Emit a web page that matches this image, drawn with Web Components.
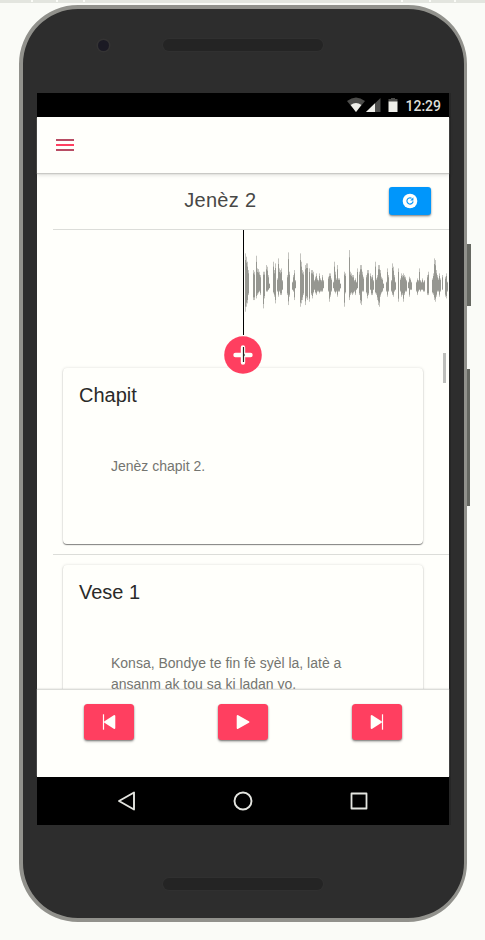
<!DOCTYPE html>
<html lang="ht"><head><meta charset="utf-8"><title>Jenèz 2</title>
<style>html,body{margin:0;height:940px;overflow:hidden;background:#fafbf7;font-family:"Liberation Sans",Arial,sans-serif}</style></head>
<body>
<phone-frame>
  <status-bar></status-bar>
  <app-toolbar></app-toolbar>
  <chapter-heading>Jenèz 2</chapter-heading>
  <scroll-pane>
    <wave-form></wave-form>
    <verse-card heading="Chapit">Jenèz chapit 2.</verse-card>
    <verse-card heading="Vese 1">Konsa, Bondye te fin fè syèl la, latè a ansanm ak tou sa ki ladan yo.</verse-card>
  </scroll-pane>
  <player-bar></player-bar>
  <nav-bar></nav-bar>
</phone-frame>
<script>
function define(name, html, init) {
  const t = document.createElement('template');
  t.innerHTML = html;
  customElements.define(name, class extends HTMLElement {
    constructor() {
      super();
      this.attachShadow({mode: 'open'}).append(t.content.cloneNode(true));
    }
    connectedCallback() { if (init) init(this, this.shadowRoot); }
  });
}

define('phone-frame', `<style>
:host{display:block;position:relative;box-sizing:border-box;height:940px;padding:5px 0 0 19px}
.strip{position:absolute;top:0;left:0;right:0;height:3px;background:#e3e5df}
.strip i{position:absolute;top:0;width:2px;height:2px;background:#fafbf7}
.side{position:absolute;left:467px;width:4px;background:#666862}
.body{box-sizing:border-box;width:448.4px;height:917.4px;border:4px solid #91918c;border-right-width:3.4px;border-radius:59px;background:#2d2d2d;padding:84px 0 0 14px;position:relative}
.screen{width:412px;height:732px;background:#fffffb;display:flex;flex-direction:column;box-shadow:2px 0 #262626;overflow:visible}
.slot{position:absolute;left:140px;width:160px;height:12px;border-radius:6px;background:#242424;box-shadow:0 0 0 1px #303030}
.cam{position:absolute;left:75px;top:31px;width:11px;height:11px;border-radius:50%;background:#1b1a24;box-shadow:0 0 0 1.5px #343333}
</style>
<div class="strip"><i style="left:31px"></i><i style="left:56px"></i><i style="left:83px"></i><i style="left:401px"></i><i style="left:429px"></i><i style="left:454px"></i></div>
<div class="side" style="top:244px;height:62px"></div><div class="side" style="top:369px;height:137px;width:3px"></div>
<div class="body"><div class="cam"></div><div class="slot" style="top:30px"></div><div class="screen"><slot></slot></div><div class="slot" style="top:869px"></div></div>`);

define('status-bar', `<style>
:host{display:flex;height:24px;background:#000;align-items:center;justify-content:flex-end;box-sizing:border-box;padding-right:8px;color:#deded9;font:500 14px/24px Roboto,sans-serif}
svg{display:block;flex:none;margin-right:6px}span{padding-top:1px}
</style>
<svg width="52" height="16" viewBox="0 0 52 16"><path d="M0 4Q9-3 18 4L9 15z" fill="#4c4c4a"/><path d="M3.6 8Q9 4 14.4 8L9 15z" fill="#eeeee9"/><path d="M19 15L33.5 1V15z" fill="#4c4c4a"/><path d="M19 15L28 6.3V15z" fill="#eeeee9"/><path d="M41.5 2h2.5V1h4v1h2.5v3h-9z" fill="#4c4c4a"/><path d="M41.5 4.5h9V15h-9z" fill="#eeeee9"/></svg><span>12:29</span>`);

define('app-toolbar', `<style>
:host{display:flex;box-sizing:border-box;flex:none;height:56px;align-items:center;padding-left:19px;box-shadow:0 1px 1px #c9c9c5,0 2px 4px #0002;z-index:2}
div{width:18px;height:12px;display:flex;flex-direction:column;justify-content:space-between}i{height:2px;background:#b84d64}i:nth-child(2){background:#ff3f60}
</style><div><i></i><i></i><i></i></div>`);

define('chapter-heading', `<style>
:host{display:flex;position:relative;box-sizing:border-box;flex:none;height:57px;margin-left:16px;border-bottom:1px solid #dcddd9;align-items:center;color:#484846;font-size:20px;letter-spacing:.3px}
span{flex:1;text-align:center;padding:0 1.5px 2px 0}
button{all:unset;display:grid;place-items:center;width:42px;height:28px;border-radius:3px;background:#0096fb;margin-right:18px;box-shadow:0 1px 2px #0006,0 2px 3px #0002}
</style><span><slot></slot></span><button aria-label="Refresh"><svg width="16" height="16" viewBox="0 0 16 16"><circle cx="8" cy="8" r="7.3" fill="#fffffb"/><path d="M9.6 5.3A3.1 3.1 0 1 0 11.1 8.4" fill="none" stroke="#0096fb" stroke-width="1.1"/><path d="M11.4 4.2v3.2H8.2z" fill="#0096fb"/></svg></button>`);

define('scroll-pane', `<style>
:host{display:block;position:relative;height:460px;flex:none;overflow:hidden}
.thumb{position:absolute;right:3px;top:123px;width:3px;height:30px;background:#bdbebb}
</style><slot></slot><div class="thumb"></div>`);

/* Each sample: x, top, bottom, in thirds of a pixel; the mid line is at 174. */
const A = '30 75 250,33 85 235,36 100 225,39 125 200,55 125 215,58 130 215,63 82 210,66 120 200,69 122 195,72 130 190,75 140 200,84 130 240,87 130 200,89 135 210,93 110 190,96 115 190,99 140 185,102 165 180,114 100 195,117 125 205,121 105 225,127 150 190,131 90 205,134 120 190,137 125 200,140 120 200,143 155 185,157 140 200,160 72 230,163 130 205,172 160 185,175 140 190,178 125 215,181 155 180,195 75 235,198 100 225,201 125 215,204 130 200,210 110 230,213 105 210,217 105 215,222 120 220,229 125 200,232 125 210,235 130 195,238 155 185,241 145 195,244 135 200,247 150 190,250 155 190,253 135 195,256 150 190,259 155 190,262 140 190,265 155 180,279 145 190,282 135 220,285 135 205,288 150 190,294 160 180,297 100 190,300 130 195,303 150 190,306 110 205,309 150 190,312 150 190,315 165 180,327 130 230';
const B = '0 168 180,12 140 235,15 135 195,27 65 215,30 130 200,33 135 195,36 140 200,39 140 195,42 155 190,45 150 200,48 160 185,51 120 180,57 130 200,60 110 225,63 110 230,66 130 190,69 145 190,79 140 195,82 125 210,85 125 200,91 135 185,94 145 200,97 140 200,100 155 185,107 100 195,110 150 200,113 140 215,116 110 230,119 110 235,122 125 205,125 145 195,128 150 190,131 165 180,139 160 190,142 120 205,145 140 190,153 155 190,156 105 200,159 115 205,162 140 190,165 160 185,175 120 220,181 150 190,184 135 205,187 140 200,190 135 220,193 140 200,196 145 190,199 155 190,205 160 180,208 145 205,211 150 185,214 160 185,229 160 190,232 150 200,235 155 190,238 120 185,241 155 190,244 160 185,247 150 185,250 160 190,253 155 190,262 140 200,265 130 200,276 150 195,279 135 200,282 90 215,285 95 220,288 125 205,291 140 190,294 150 190,297 135 205,300 150 190,308 140 185,315 145 205,318 135 210,321 160 190';
define('wave-form', `<style>
:host{display:block;position:relative;height:137.5px}
svg{display:block}
.add{position:absolute;left:187px;top:106px;z-index:3}
</style><svg width="412" height="105"><path id="tips" fill="none" stroke="#c3c3be"/><path id="core" fill="none" stroke="#969791"/><path d="M206.5 0V105" stroke="#000"/></svg>
<svg class="add" width="38" height="38" viewBox="0 0 38 38"><circle cx="19" cy="19" r="18.8" fill="#ff3f60"/><path d="M11.5 19H26.5M19 11.5V26.5" stroke="#fffffb" stroke-width="4.4" stroke-linecap="round"/><path d="M19.5 11V26M19 19H21" stroke="#222" stroke-width="1.2"/></svg>`, (el, root) => {
  let tips = '', core = '';
  for (const [set, offset] of [[A, 198], [B, 303]]) for (const s of set.split(',')) {
    const [zx, a, b] = s.split(' ').map(Number);
    const x = Math.floor(offset + zx / 3) + .5;
    tips += `M${x} ${a / 3 - 1.6}V${b / 3 - 1.6}`;
    core += `M${x} ${(174 - (174 - a) * .8) / 3 - 1.6}V${(174 + (b - 174) * .8) / 3 - 1.6}`;
  }
  root.getElementById('tips').setAttribute('d', tips);
  root.getElementById('core').setAttribute('d', core);
});

define('verse-card', `<style>
:host{display:block;box-sizing:border-box;height:197px;margin-left:16px}
article{box-sizing:border-box;width:360px;height:176.5px;margin-left:10px;padding:16px 16px;border-radius:4px;background:#fffffb;box-shadow:0 1px 1px #0007,0 0 3px #0002}
h2{margin:0;font-size:20px;line-height:22px;font-weight:400;color:#2a2a29}
p{margin:50px 32px 0;font-size:14px;line-height:21px;color:#747570}
hr{border:0;height:1px;background:#dcddd9;margin:10px 0 0}
</style><article><h2></h2><p><slot></slot></p></article><hr>`, (el, root) => {
  root.querySelector('h2').textContent = el.getAttribute('heading');
});

define('player-bar', `<style>
:host{display:flex;flex:none;box-sizing:border-box;height:87px;padding:14px 5px;align-items:flex-start;justify-content:space-around;background:#fffffb;box-shadow:0 -1px 1px #dcddd9,0 -1px 2px #0002;z-index:2}
button{all:unset;display:grid;place-items:center;width:50px;height:36px;border-radius:3.5px;background:#ff3f60;box-shadow:0 1px 2px #0007,0 2px 3px #0002}
svg{display:block}
</style>
<button aria-label="Previous"><svg width="16" height="18" viewBox="0 0 16 18"><path d="M2.5 1.3V16.7" stroke="#fffffb" stroke-width="1.2"/><path d="M4 9L13.3 3V15z" fill="#fffffb" stroke="#fffffb" stroke-width="2" stroke-linejoin="round"/></svg></button>
<button aria-label="Play"><svg width="16" height="18" viewBox="0 0 16 18"><path d="M2.7 3L13.4 9L2.7 15z" fill="#fffffb" stroke="#fffffb" stroke-width="2" stroke-linejoin="round"/></svg></button>
<button aria-label="Next"><svg width="16" height="18" viewBox="0 0 16 18"><path d="M13.5 1.3V16.7" stroke="#fffffb" stroke-width="1.2"/><path d="M12 9L2.7 3V15z" fill="#fffffb" stroke="#fffffb" stroke-width="2" stroke-linejoin="round"/></svg></button>`);

define('nav-bar', `<style>
:host{display:flex;flex:none;box-sizing:border-box;height:48px;padding:0 32px;align-items:center;justify-content:space-around;background:#000;z-index:3}
svg{display:block}
</style>
<svg width="20" height="20" viewBox="0 0 20 20" fill="none" stroke="#e4e5e0" stroke-width="1.9" stroke-linejoin="round"><path d="M2 10L17 1.5V18.5z"/></svg>
<svg width="20" height="20" viewBox="0 0 20 20" fill="none" stroke="#e4e5e0" stroke-width="1.9"><circle cx="10" cy="10" r="8.5"/></svg>
<svg width="20" height="20" viewBox="0 0 20 20" fill="none" stroke="#e4e5e0" stroke-width="1.8" stroke-linejoin="round"><path d="M2.5 2.5h15v15h-15z"/></svg>`);
</script>
</body></html>
